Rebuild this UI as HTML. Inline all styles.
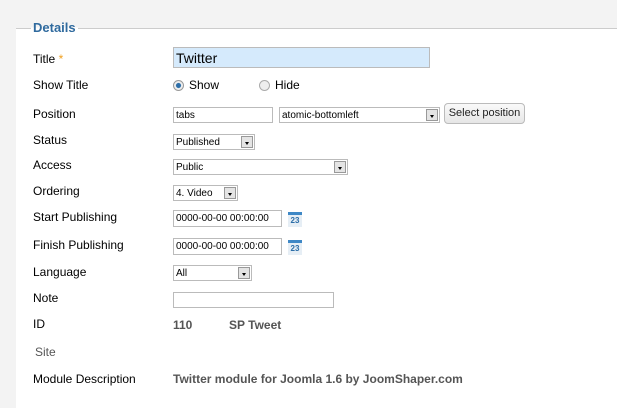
<!DOCTYPE html>
<html><head><meta charset="utf-8"><style>
body{margin:0;width:617px;height:408px;background:#f3f3f3;font-family:"Liberation Sans",sans-serif;position:relative;overflow:hidden;color:#000}
.panel{position:absolute;left:16px;top:28px;right:0;bottom:0;background:#fff;border-top:1px solid #ccc}
.a{position:absolute}
.lbl{position:absolute;left:33px;font-size:12px;line-height:14px}
.legend{position:absolute;left:31px;top:20px;padding:0 2px;color:#2f6a9e;font-weight:bold;font-size:13px;background:linear-gradient(#f3f3f3 50%,#fff 50%)}
.box{position:absolute;border:1px solid #bbb;background:#fff;box-sizing:border-box;font-size:10px;line-height:15px;padding-left:2px;white-space:nowrap;overflow:hidden}
.sel .arr{position:absolute;right:1px;top:1px;bottom:1px;width:12px;background:#e4e4e4;border:1px solid #999;box-sizing:border-box}
.sel .arr:after{content:"";position:absolute;left:3px;top:5px;border-left:2.5px solid transparent;border-right:2.5px solid transparent;border-top:3px solid #000}
.cal{position:absolute;width:14px;height:15px;background:#e6eef5;border-top:3px solid #3f88c6;box-sizing:border-box;font-size:8px;font-weight:bold;color:#2d6ea8;text-align:center;line-height:11px}
.val{position:absolute;font-size:12px;color:#555;font-weight:bold}
</style></head><body>
<div class="panel"></div>
<div class="legend">Details</div>
<div class="lbl" style="top:52px">Title <span style="color:#f0a020">*</span></div>
<div class="lbl" style="top:78px">Show Title</div>
<div class="lbl" style="top:107px">Position</div>
<div class="lbl" style="top:133px">Status</div>
<div class="lbl" style="top:158px">Access</div>
<div class="lbl" style="top:184px">Ordering</div>
<div class="lbl" style="top:210px">Start Publishing</div>
<div class="lbl" style="top:238px">Finish Publishing</div>
<div class="lbl" style="top:265px">Language</div>
<div class="lbl" style="top:291px">Note</div>
<div class="lbl" style="top:317px">ID</div>
<div class="lbl" style="top:345px;left:35px;color:#555">Site</div>
<div class="lbl" style="top:372px">Module Description</div>

<div class="box" style="left:173px;top:47px;width:257px;height:21px;background:#d5eafc;font-size:14px;line-height:20px">Twitter</div>
<div class="a" style="left:173px;top:80px;width:9px;height:9px;border-radius:50%;border:1px solid #999;background:radial-gradient(#2d6ea8 35%,#eee 45%)"></div>
<div class="a" style="left:189px;top:78px;font-size:12px">Show</div>
<div class="a" style="left:259px;top:80px;width:9px;height:9px;border-radius:50%;border:1px solid #aaa;background:#eee"></div>
<div class="a" style="left:275px;top:78px;font-size:12px">Hide</div>

<div class="box" style="left:173px;top:107px;width:100px;height:16px">tabs</div>
<div class="box sel" style="left:279px;top:107px;width:161px;height:16px">atomic-bottomleft<span class="arr"></span></div>
<div class="box" style="left:444px;top:103px;width:81px;height:21px;border-radius:4px;background:linear-gradient(#fafafa,#e6e6e6);font-size:11px;line-height:19px;text-align:center;padding:0;color:#222">Select position</div>

<div class="box sel" style="left:173px;top:134px;width:82px;height:16px">Published<span class="arr"></span></div>
<div class="box sel" style="left:173px;top:159px;width:175px;height:16px">Public<span class="arr"></span></div>
<div class="box sel" style="left:173px;top:185px;width:65px;height:16px">4. Video<span class="arr"></span></div>
<div class="box" style="left:173px;top:210px;width:109px;height:17px">0000-00-00 00:00:00</div>
<div class="cal" style="left:288px;top:212px">23</div>
<div class="box" style="left:173px;top:238px;width:109px;height:17px">0000-00-00 00:00:00</div>
<div class="cal" style="left:288px;top:240px">23</div>
<div class="box sel" style="left:173px;top:265px;width:79px;height:16px">All<span class="arr"></span></div>
<div class="box" style="left:173px;top:292px;width:161px;height:16px"></div>
<div class="val" style="left:173px;top:318px">110</div>
<div class="val" style="left:229px;top:318px">SP Tweet</div>
<div class="val" style="left:173px;top:372px">Twitter module for Joomla 1.6 by JoomShaper.com</div>
</body></html>
